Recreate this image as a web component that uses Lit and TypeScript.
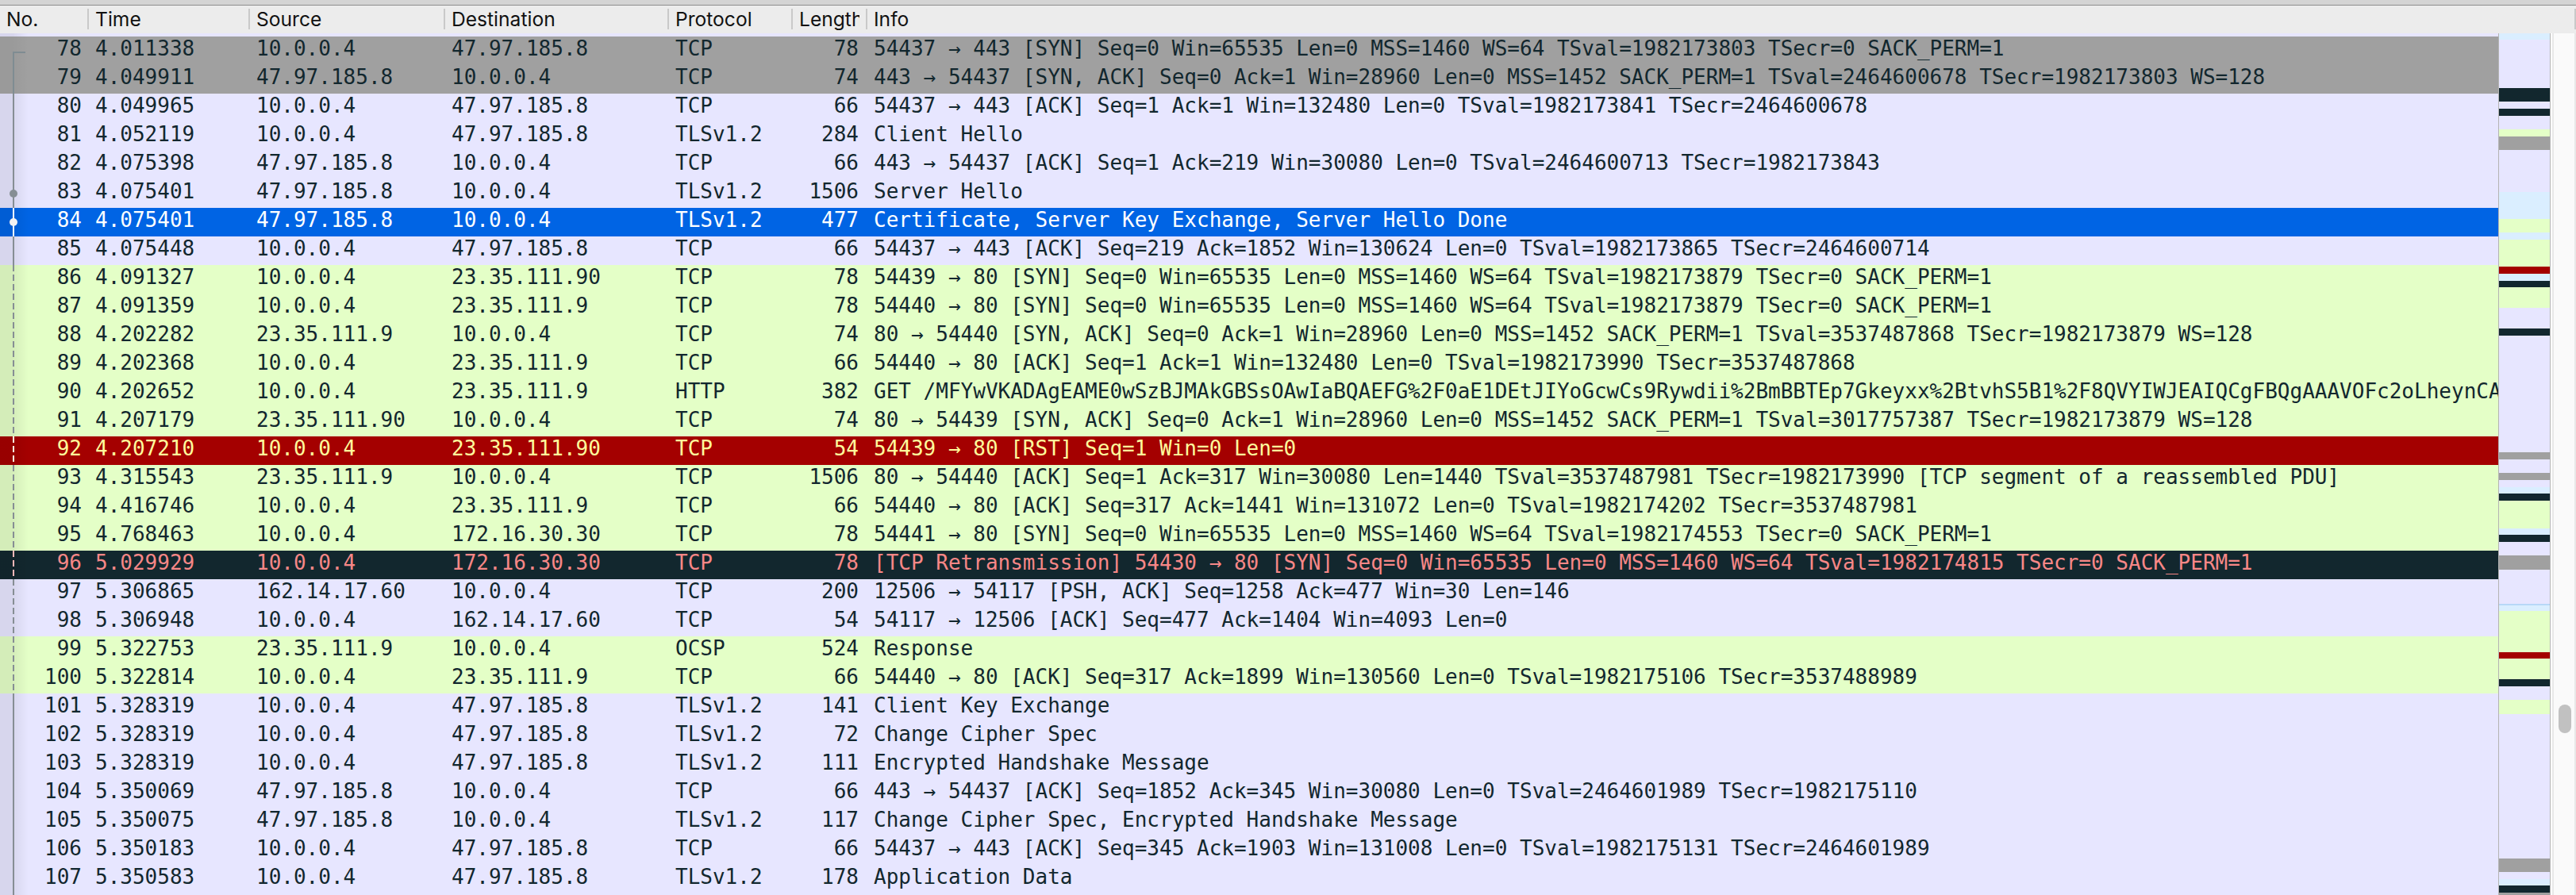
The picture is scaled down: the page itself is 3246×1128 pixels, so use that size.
import { LitElement, html, css } from "lit";
import { customElement } from "lit/decorators.js";

const A = "10.0.0.4", B = "47.97.185.8", C = "23.35.111.9", D = "23.35.111.90", E = "172.16.30.30", F = "162.14.17.60";
const P = "TLSv1.2";
type Row = [number, string, string, string, string, number, string, string];
const SYN = "Seq=0 Win=65535 Len=0 MSS=1460 WS=64";
const rows: Row[] = [
  [78, "4.011338", A, B, "TCP", 78, `54437 → 443 [SYN] ${SYN} TSval=1982173803 TSecr=0 SACK_PERM=1`, "gray"],
  [79, "4.049911", B, A, "TCP", 74, "443 → 54437 [SYN, ACK] Seq=0 Ack=1 Win=28960 Len=0 MSS=1452 SACK_PERM=1 TSval=2464600678 TSecr=1982173803 WS=128", "gray"],
  [80, "4.049965", A, B, "TCP", 66, "54437 → 443 [ACK] Seq=1 Ack=1 Win=132480 Len=0 TSval=1982173841 TSecr=2464600678", "lav"],
  [81, "4.052119", A, B, P, 284, "Client Hello", "lav"],
  [82, "4.075398", B, A, "TCP", 66, "443 → 54437 [ACK] Seq=1 Ack=219 Win=30080 Len=0 TSval=2464600713 TSecr=1982173843", "lav"],
  [83, "4.075401", B, A, P, 1506, "Server Hello", "lav"],
  [84, "4.075401", B, A, P, 477, "Certificate, Server Key Exchange, Server Hello Done", "sel"],
  [85, "4.075448", A, B, "TCP", 66, "54437 → 443 [ACK] Seq=219 Ack=1852 Win=130624 Len=0 TSval=1982173865 TSecr=2464600714", "lav"],
  [86, "4.091327", A, D, "TCP", 78, `54439 → 80 [SYN] ${SYN} TSval=1982173879 TSecr=0 SACK_PERM=1`, "green"],
  [87, "4.091359", A, C, "TCP", 78, `54440 → 80 [SYN] ${SYN} TSval=1982173879 TSecr=0 SACK_PERM=1`, "green"],
  [88, "4.202282", C, A, "TCP", 74, "80 → 54440 [SYN, ACK] Seq=0 Ack=1 Win=28960 Len=0 MSS=1452 SACK_PERM=1 TSval=3537487868 TSecr=1982173879 WS=128", "green"],
  [89, "4.202368", A, C, "TCP", 66, "54440 → 80 [ACK] Seq=1 Ack=1 Win=132480 Len=0 TSval=1982173990 TSecr=3537487868", "green"],
  [90, "4.202652", A, C, "HTTP", 382, "GET /MFYwVKADAgEAME0wSzBJMAkGBSsOAwIaBQAEFG%2F0aE1DEtJIYoGcwCs9Rywdii%2BmBBTEp7Gkeyxx%2BtvhS5B1%2F8QVYIWJEAIQCgFBQgAAAVOFc2oLheynCA", "green"],
  [91, "4.207179", D, A, "TCP", 74, "80 → 54439 [SYN, ACK] Seq=0 Ack=1 Win=28960 Len=0 MSS=1452 SACK_PERM=1 TSval=3017757387 TSecr=1982173879 WS=128", "green"],
  [92, "4.207210", A, D, "TCP", 54, "54439 → 80 [RST] Seq=1 Win=0 Len=0", "red"],
  [93, "4.315543", C, A, "TCP", 1506, "80 → 54440 [ACK] Seq=1 Ack=317 Win=30080 Len=1440 TSval=3537487981 TSecr=1982173990 [TCP segment of a reassembled PDU]", "green"],
  [94, "4.416746", A, C, "TCP", 66, "54440 → 80 [ACK] Seq=317 Ack=1441 Win=131072 Len=0 TSval=1982174202 TSecr=3537487981", "green"],
  [95, "4.768463", A, E, "TCP", 78, `54441 → 80 [SYN] ${SYN} TSval=1982174553 TSecr=0 SACK_PERM=1`, "green"],
  [96, "5.029929", A, E, "TCP", 78, `[TCP Retransmission] 54430 → 80 [SYN] ${SYN} TSval=1982174815 TSecr=0 SACK_PERM=1`, "dark"],
  [97, "5.306865", F, A, "TCP", 200, "12506 → 54117 [PSH, ACK] Seq=1258 Ack=477 Win=30 Len=146", "lav"],
  [98, "5.306948", A, F, "TCP", 54, "54117 → 12506 [ACK] Seq=477 Ack=1404 Win=4093 Len=0", "lav"],
  [99, "5.322753", C, A, "OCSP", 524, "Response", "green"],
  [100, "5.322814", A, C, "TCP", 66, "54440 → 80 [ACK] Seq=317 Ack=1899 Win=130560 Len=0 TSval=1982175106 TSecr=3537488989", "green"],
  [101, "5.328319", A, B, P, 141, "Client Key Exchange", "lav"],
  [102, "5.328319", A, B, P, 72, "Change Cipher Spec", "lav"],
  [103, "5.328319", A, B, P, 111, "Encrypted Handshake Message", "lav"],
  [104, "5.350069", B, A, "TCP", 66, "443 → 54437 [ACK] Seq=1852 Ack=345 Win=30080 Len=0 TSval=2464601989 TSecr=1982175110", "lav"],
  [105, "5.350075", B, A, P, 117, "Change Cipher Spec, Encrypted Handshake Message", "lav"],
  [106, "5.350183", A, B, "TCP", 66, "54437 → 443 [ACK] Seq=345 Ack=1903 Win=131008 Len=0 TSval=1982175131 TSecr=2464601989", "lav"],
  [107, "5.350583", A, B, P, 178, "Application Data", "lav"],
];

const heads = ["No.", "Time", "Source", "Destination", "Protocol", "Length", "Info"];

// [end y, colour class] of each minimap band, starting at y = 42.
const bands: [number, string][] = [
  [50, "lb"], [111, "lav"], [128, "dark"], [137, "lav"], [146, "dark"], [163, "lav"], [172, "green"], [189, "gray"],
  [242, "lav"], [276, "lb"], [293, "green"], [302, "lb"], [336, "green"], [345, "red"], [354, "lb"], [362, "dark"],
  [388, "green"], [414, "lav"], [423, "dark"], [570, "lav"], [579, "gray"], [596, "lav"], [605, "gray"], [614, "lav"],
  [622, "lb"], [631, "dark"], [666, "green"], [674, "lb"], [683, "dark"], [700, "lav"], [718, "gray"], [761, "lav"],
  [763, "mb"], [770, "lb"], [822, "green"], [830, "red"], [856, "green"], [865, "dark"], [882, "lav"], [900, "green"],
  [1082, "lav"], [1099, "gray"], [1108, "lav"], [1116, "lb"], [1125, "dark"], [1128, "gray"],
];

function lineKind(no: number): string {
  if (no === 78) return "start";
  return no >= 86 && no <= 100 ? "dash" : "solid";
}

@customElement("app-root")
export class AppRoot extends LitElement {
  static styles = css`
    :host {
      display: block;
      width: 3246px;
      height: 1128px;
      overflow: hidden;
      background: #fafafa;
      --cols: 112px 203px 246px 282px 156px 94px 1fr;
      --ink: #12272e;
    }
    .top {
      height: 6px;
      background: #d4d4d4;
      border-bottom: 1px solid #8e8e8e;
    }
    .head {
      display: grid;
      grid-template-columns: var(--cols);
      height: 35px;
      background: #ececec;
      font: 400 24.6px/1 Inter, "Liberation Sans", sans-serif;
      color: #111;
    }
    .hcell {
      display: flex;
      min-width: 0;
      padding-left: 8px;
    }
    .hlabel {
      flex: 1;
      min-width: 0;
      margin-right: 8px;
      overflow: hidden;
      white-space: nowrap;
      line-height: 34px;
      height: 35px;
    }
    .sep {
      flex: none;
      width: 2px;
      height: 26px;
      margin-top: 4px;
      background: #c9c9c9;
    }
    .body {
      display: flex;
      height: 1086px;
    }
    .list {
      flex: none;
      width: 3148px;
      overflow: hidden;
      font: 400 26px/30px "DejaVu Sans Mono", "Liberation Mono", monospace;
      color: var(--ink);
    }
    .sliver {
      position: relative;
      background: #e7e6ff;
    }
    .s-top { height: 4px; }
    .s-bot { height: 2px; }
    .row {
      position: relative;
      display: grid;
      grid-template-columns: var(--cols);
      height: 36px;
      --line: #868e94;
      --shade: rgba(0, 0, 0, 0.07);
    }
    .sliver { --line: #868e94; --shade: rgba(0, 0, 0, 0.07); }
    .lav { background: #e7e6ff; }
    .gray { background: #a0a0a0; }
    .row.gray { --shade: rgba(0, 0, 0, 0.04); --line: #7f8c92; }
    .green { background: #e4ffc7; }
    .sel { background: #0064e4; color: #fff; --line: #fff; }
    .red { background: #a40000; color: #fffc9c; --line: #fffbe0; }
    .dark { background: #12272e; color: #f78787; --line: #fbb8b8; }
    .lb { background: #daeeff; }
    .mb { background: #b8d8f8; }
    .cell {
      min-width: 0;
      padding: 0 8px;
      overflow: hidden;
      white-space: pre;
    }
    .num { text-align: right; padding-right: 9px; }
    .len { text-align: right; padding-right: 11px; }
    .info { padding-right: 0; }
    .gutter {
      position: absolute;
      inset: 0 auto 0 0;
      width: 36px;
      pointer-events: none;
      background: linear-gradient(90deg, var(--shade) 0, var(--shade) 16px, transparent 36px);
    }
    .line {
      position: absolute;
      left: 16px;
      top: 0;
      bottom: 0;
      width: 2px;
    }
    .solid { background: var(--line); }
    .dash { background: repeating-linear-gradient(180deg, var(--line) 0, var(--line) 8px, transparent 8px, transparent 12px); }
    .start {
      top: 19px;
      width: 16px;
      border-top: 2px solid var(--line);
      border-left: 2px solid var(--line);
      box-sizing: border-box;
    }
    .dot {
      position: absolute;
      left: 12px;
      top: 13px;
      width: 10px;
      height: 10px;
      border-radius: 50%;
      background: #868e94;
    }
    .sel .dot { background: #f2f2f2; }
    .map {
      flex: none;
      width: 66px;
      box-sizing: border-box;
      border-left: 1px solid #b4b4b4;
      border-right: 1px solid #b4b4b4;
      display: flex;
      flex-direction: column;
    }
    .band { flex: none; }
    .gap {
      flex: none;
      width: 2px;
      background: #fff;
    }
    .track {
      flex: 1;
      box-sizing: border-box;
      border-left: 2px solid #e8e8e8;
      border-right: 2px solid #e8e8e8;
      background: #fafafa;
      padding: 846px 0 0 6px;
    }
    .thumb {
      width: 16px;
      height: 36px;
      border-radius: 8px;
      background: #c1c1c1;
    }
  `;

  render() {
    let y = 42;
    return html`
      <div class="top"></div>
      <div class="head">
        ${heads.map((h) => html`<div class="hcell"><div class="hlabel">${h}</div><div class="sep"></div></div>`)}
      </div>
      <div class="body">
        <div class="list">
          <div class="sliver s-top"><div class="gutter"></div></div>
          ${rows.map(
            (r) => html`
              <div class="row ${r[7]}">
                <div class="cell num">${r[0]}</div>
                <div class="cell">${r[1]}</div>
                <div class="cell">${r[2]}</div>
                <div class="cell">${r[3]}</div>
                <div class="cell">${r[4]}</div>
                <div class="cell len">${r[5]}</div>
                <div class="cell info">${r[6]}</div>
                <div class="gutter">
                  <div class="line ${lineKind(r[0])}"></div>
                  ${r[0] === 83 || r[0] === 84 ? html`<div class="dot"></div>` : ""}
                </div>
              </div>
            `
          )}
          <div class="sliver s-bot"><div class="gutter"><div class="line solid"></div></div></div>
        </div>
        <div class="map">
          ${bands.map(([end, cls]) => {
            const h = end - y;
            y = end;
            return html`<div class="band ${cls}" style="height:${h}px"></div>`;
          })}
        </div>
        <div class="gap"></div>
        <div class="track"><div class="thumb"></div></div>
      </div>
    `;
  }
}
